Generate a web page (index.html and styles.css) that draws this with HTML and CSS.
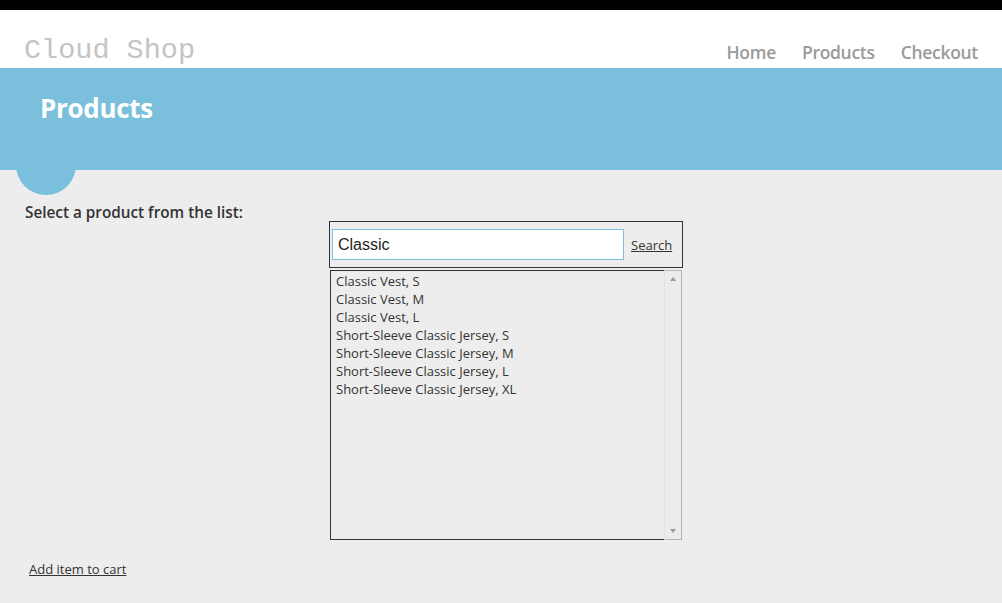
FILE: index.html
```html
<!DOCTYPE html>
<html>
<head>
<meta charset="utf-8">
<title>Cloud Shop</title>
<link rel="stylesheet" href="styles.css">
</head>
<body>
<div class="topbar"></div>
<header class="header">
  <div class="logo">Cloud Shop</div>
  <nav class="nav">
    <a href="#">Home</a>
    <a href="#">Products</a>
    <a href="#">Checkout</a>
  </nav>
</header>
<section class="banner">
  <h1>Products</h1>
  <div class="bubble"></div>
</section>
<main class="main">
  <div class="label">Select a product from the list:</div>
  <div class="panel">
    <div class="search">
      <input class="search-input" type="text" value="Classic">
      <a href="#" class="search-link">Search</a>
    </div>
  </div>
  <div class="listbox">
    <ul class="items">
      <li>Classic Vest, S</li>
      <li>Classic Vest, M</li>
      <li>Classic Vest, L</li>
      <li>Short-Sleeve Classic Jersey, S</li>
      <li>Short-Sleeve Classic Jersey, M</li>
      <li>Short-Sleeve Classic Jersey, L</li>
      <li>Short-Sleeve Classic Jersey, XL</li>
    </ul>
    <div class="scrollbar">
      <span class="arrow up"></span>
      <span class="arrow down"></span>
    </div>
  </div>
  <a href="#" class="add-link">Add item to cart</a>
</main>
</body>
</html>
```
FILE: styles.css
```css
html, body {
  margin: 0;
  padding: 0;
  background: #ededed;
  font-family: "Open Sans", "Noto Sans", sans-serif;
  color: #333;
}
.topbar {
  height: 10px;
  background: #000;
}
.header {
  height: 58px;
  background: #fff;
  display: flex;
  justify-content: space-between;
  align-items: flex-end;
  padding: 0 24px 0 24px;
}
.logo {
  font-family: "Liberation Mono", "DejaVu Sans Mono", monospace;
  font-size: 28.5px;
  color: #c4c4c4;
  line-height: 1;
  padding-bottom: 3px;
}
.nav {
  display: flex;
  gap: 26px;
  padding-bottom: 7px;
}
.nav a {
  font-size: 17.5px;
  font-weight: 600;
  color: #9a9a9a;
  text-decoration: none;
  line-height: 1;
  letter-spacing: -0.3px;
}
.banner {
  position: relative;
  height: 102px;
  background: #7abfdb;
  padding: 0 40px;
}
.banner h1 {
  margin: 0;
  padding-top: 27px;
  font-size: 26px;
  font-weight: 700;
  color: #fff;
  line-height: 1;
  letter-spacing: -0.3px;
}
.bubble {
  position: absolute;
  left: 16px;
  top: 72px;
  width: 60px;
  height: 55px;
  border-radius: 0 0 30px 30px;
  background: #7abfdb;
}
.main {
  padding: 33px 0 0 25px;
}
.label {
  font-size: 15.3px;
  font-weight: 600;
  line-height: 18px;
  color: #333;
}
.panel {
  margin-left: 304px;
  width: 352px;
  height: 45px;
  border: 1px solid #333;
  box-sizing: content-box;
  display: flex;
  align-items: center;
}
.search {
  display: flex;
  align-items: center;
  padding-left: 2px;
}
.search-input {
  width: 292px;
  height: 31px;
  box-sizing: border-box;
  border: 1px solid #7abfdb;
  background: #fff;
  padding: 0 5px;
  font-family: "Liberation Sans", Arial, sans-serif;
  font-size: 16px;
  color: #222;
  outline: none;
  margin: 0;
}
.search-link {
  margin-left: 7px;
  font-size: 13px;
  color: #333;
  text-decoration: underline;
}
.listbox {
  margin-left: 305px;
  margin-top: 2px;
  width: 352px;
  height: 270px;
  display: flex;
  border-top: 1px solid #333;
  border-left: 1px solid #333;
  border-bottom: 1px solid #333;
  box-sizing: border-box;
}
.items {
  list-style: none;
  margin: 0;
  padding: 1px 0 0 5px;
  flex: 1;
  font-size: 13px;
  line-height: 18px;
  color: #333;
}
.scrollbar {
  position: relative;
  width: 16px;
  border-left: 1px solid #e2e2e2;
  border-right: 1px solid #b5b5b5;
  border-top: 1px solid #b5b5b5;
  margin-top: -1px;
  margin-bottom: -1px;
  border-bottom: 1px solid #b5b5b5;
  background: #ececec;
}
.arrow {
  position: absolute;
  left: 5px;
  width: 0;
  height: 0;
  border-left: 3.5px solid transparent;
  border-right: 3.5px solid transparent;
}
.arrow.up {
  top: 6px;
  border-bottom: 4px solid #9a9a9a;
}
.arrow.down {
  bottom: 6px;
  border-top: 4px solid #9a9a9a;
}
.add-link {
  display: inline-block;
  margin-top: 20px;
  margin-left: 4px;
  font-size: 13px;
  color: #333;
  text-decoration: underline;
}
```
